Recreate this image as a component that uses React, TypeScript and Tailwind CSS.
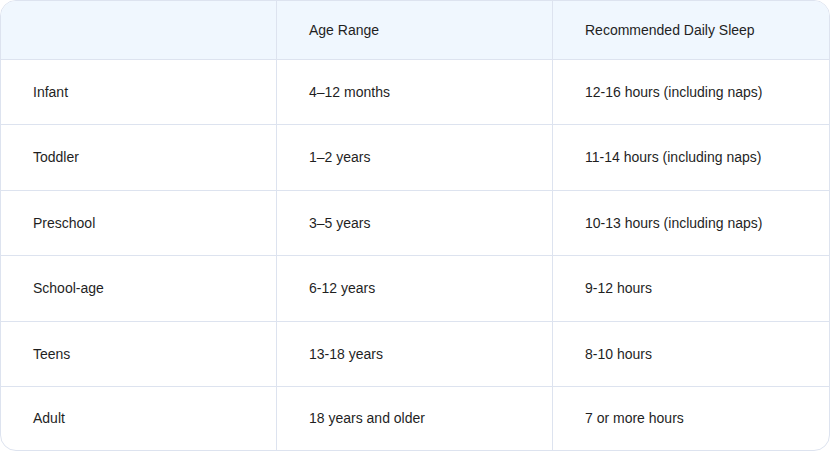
import React from 'react';

const rows: [string, string, string][] = [
  ['Infant', '4–12 months', '12-16 hours (including naps)'],
  ['Toddler', '1–2 years', '11-14 hours (including naps)'],
  ['Preschool', '3–5 years', '10-13 hours (including naps)'],
  ['School-age', '6-12 years', '9-12 hours'],
  ['Teens', '13-18 years', '8-10 hours'],
  ['Adult', '18 years and older', '7 or more hours'],
];

// row heights alternate slightly to match the 65.4px pitch
const rowClass = [
  'grid grid-cols-[276px_276px_1fr] h-[65px] border-b border-[#dde3ef]',
  'grid grid-cols-[276px_276px_1fr] h-[66px] border-b border-[#dde3ef]',
  'grid grid-cols-[276px_276px_1fr] h-[65px] border-b border-[#dde3ef]',
  'grid grid-cols-[276px_276px_1fr] h-[66px] border-b border-[#dde3ef]',
  'grid grid-cols-[276px_276px_1fr] h-[65px] border-b border-[#dde3ef]',
  'grid grid-cols-[276px_276px_1fr] h-[63px]',
];

const App: React.FC = () => {
  return (
    <div className="w-[830px] h-[451px] bg-white" style={{ fontFamily: '"Liberation Sans", Arial, sans-serif' }}>
      <div className="h-full border border-[#dde3ef] rounded-[16px] overflow-hidden text-[14px] text-[#1f1f1f]">
        {/* header */}
        <div className="grid grid-cols-[276px_276px_1fr] h-[59px] bg-[#f0f7fe] border-b border-[#dde3ef]">
          <div className="border-r border-[#dde3ef]" />
          <div className="flex items-center pl-8 border-r border-[#dde3ef]">Age Range</div>
          <div className="flex items-center pl-8">Recommended Daily Sleep</div>
        </div>
        {rows.map(([group, age, sleep], i) => (
          <div key={group} className={rowClass[i]}>
            <div className="flex items-center pl-8 border-r border-[#dde3ef]">{group}</div>
            <div className="flex items-center pl-8 border-r border-[#dde3ef]">{age}</div>
            <div className="flex items-center pl-8">{sleep}</div>
          </div>
        ))}
      </div>
    </div>
  );
};

export default App;
